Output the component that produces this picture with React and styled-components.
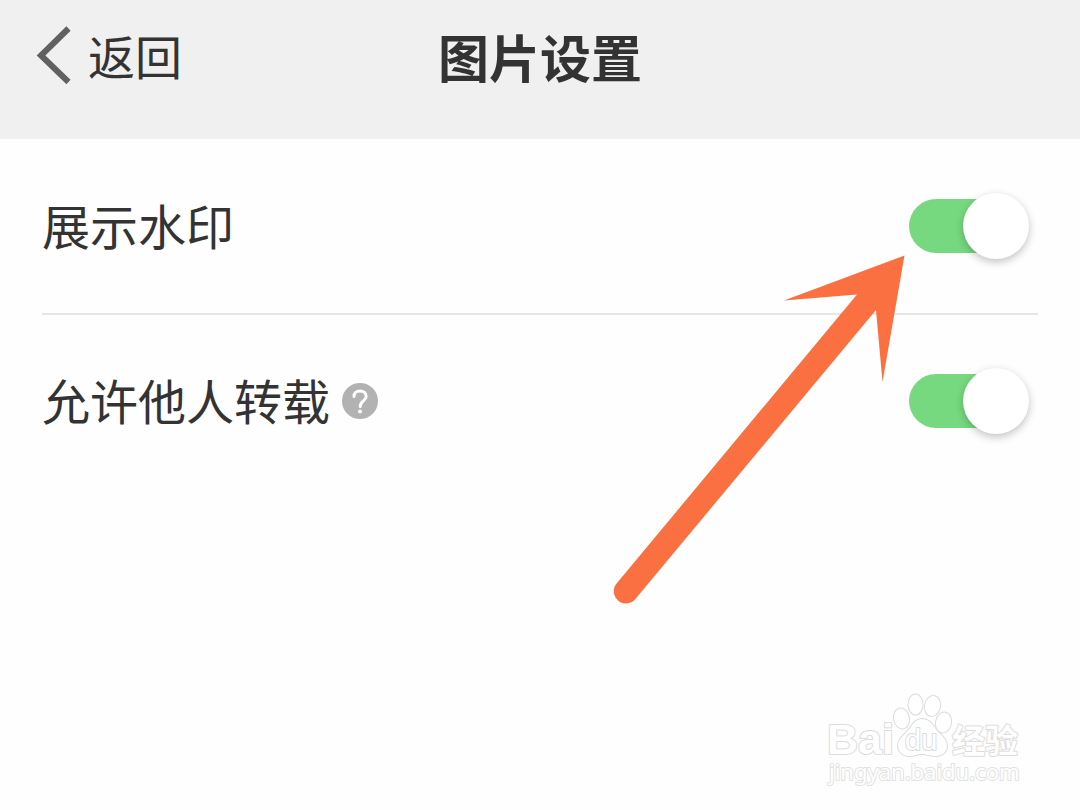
import React, { useState } from "react";
import styled, { createGlobalStyle } from "styled-components";

const GlobalStyle = createGlobalStyle`
  body {
    margin: 0;
    background-color: #fefefe;
    color: #333;
    font-family: "Noto Sans CJK SC", "Noto Sans", sans-serif;
  }
`;

const Page = styled.div`
  position: relative;
  min-height: 100vh;
  overflow: hidden;
`;

const Header = styled.header`
  display: grid;
  grid-template-columns: 1fr auto 1fr;
  align-items: center;
  box-sizing: border-box;
  padding: 20px 36px 47px;
  background-color: #f0f0f0;
`;

const BackButton = styled.button`
  display: flex;
  align-items: center;
  justify-self: start;
  gap: 16px;
  padding: 0 0 2px;
  border: none;
  background: none;
  color: inherit;
  font: inherit;
  font-size: 47px;
  line-height: 68px;
  cursor: pointer;
`;

const Title = styled.h1`
  margin: 0;
  padding: 2px 0;
  font-size: 51px;
  font-weight: 700;
  line-height: 68px;
`;

const Settings = styled.main`
  padding: 0 42px;
`;

const Row = styled.div`
  display: flex;
  align-items: center;
  justify-content: space-between;
  padding: 51px 0;

  & + & {
    padding: 50px 0;
    border-top: 2px solid #e6e6e6;
  }
`;

const LabelGroup = styled.div`
  display: flex;
  align-items: center;
  gap: 12px;
`;

const Label = styled.label`
  padding-bottom: 4px;
  font-size: 48px;
  line-height: 68px;
`;

const HelpButton = styled.button`
  display: flex;
  padding: 0;
  border: none;
  background: none;
  cursor: pointer;
`;

const Switch = styled.input`
  appearance: none;
  position: relative;
  width: 108px;
  height: 54px;
  margin: 0 21px 0 0;
  border-radius: 27px;
  background-color: ${(props) => (props.checked ? "#77d97f" : "#d9d9d9")};
  cursor: pointer;

  &::after {
    content: "";
    position: absolute;
    top: -6px;
    left: ${(props) => (props.checked ? "54px" : "-12px")};
    width: 66px;
    height: 66px;
    border-radius: 50%;
    background-color: #fff;
    box-shadow: 0 3px 9px rgba(0, 0, 0, 0.24);
  }
`;

const Arrow = styled.svg`
  position: absolute;
  top: 255px;
  right: 175px;
  pointer-events: none;
`;

const Watermark = styled.svg`
  position: absolute;
  right: 50px;
  bottom: 16px;
  pointer-events: none;
`;

const BackIcon = () => (
  <svg width="36" height="60" viewBox="0 0 36 60" aria-hidden="true">
    <path d="M32.500 3.500L5 30.500L32.500 57" fill="none" stroke="#616161" strokeWidth="6" />
  </svg>
);

const HelpIcon = () => (
  <svg width="36" height="36" viewBox="0 0 36 36" aria-hidden="true">
    <circle cx="18" cy="18" r="18" fill="#b2b2b2" />
    <path
      d="M12 13.500C12 10 14.500 8 18 8C21.500 8 24.200 10 24.200 13.300C24.200 18 18.200 18 18.200 23.500"
      fill="none"
      stroke="#fff"
      strokeWidth="3"
      strokeLinecap="round"
    />
    <circle cx="18" cy="28.500" r="2" fill="#fff" />
  </svg>
);

const PointerArrow = () => (
  <Arrow width="292" height="350" viewBox="613 255 292 350" aria-hidden="true">
    <path
      d="M904.500 255.500L784 300.500L857 294.500L617 583A12 12 0 0 0 635 599.500L876 310L882.500 382Z"
      fill="#fa7041"
    />
  </Arrow>
);

const BaiduWatermark = () => (
  <Watermark
    width="210"
    height="104"
    viewBox="820 690 210 104"
    fill="#fff"
    stroke="#dcdcdc"
    strokeWidth="2"
    strokeLinejoin="round"
    paintOrder="stroke"
    role="img"
    aria-label="Baidu"
  >
    <text x="827" y="754" fontFamily="Liberation Sans, sans-serif" fontWeight="700" fontSize="43">
      Bai
    </text>
    <g>
      <ellipse cx="901.500" cy="718.500" rx="7.500" ry="10" transform="rotate(-12 901.500 718.500)" />
      <ellipse cx="915.500" cy="704.500" rx="7" ry="10" />
      <ellipse cx="932.500" cy="706" rx="7.500" ry="10" transform="rotate(12 932.500 706)" />
      <ellipse cx="943.500" cy="722.500" rx="7.500" ry="10" transform="rotate(12 943.500 722.500)" />
      <path d="M922 719C928 719 932 723 935 728C939 734 947 738 947 746C947 752 942 756 936 756C930 756 927 754 922 754C917 754 914 756 909 756C903 756 898 752 898 745C898 738 906 734 910 728C913 723 917 719 922 719Z" />
    </g>
    <text x="905" y="750" fontFamily="Liberation Sans, sans-serif" fontSize="29">
      du
    </text>
    <text x="952" y="753" fontFamily="Noto Sans CJK SC, sans-serif" fontWeight="700" fontSize="33">
      经验
    </text>
    <text x="829" y="780" fontFamily="Noto Sans, sans-serif" fontSize="22" stroke="#e2e2e2">
      jingyan.baidu.com
    </text>
  </Watermark>
);

function App() {
  const [watermark, setWatermark] = useState(true);
  const [repost, setRepost] = useState(true);

  return (
    <>
      <GlobalStyle />
      <Page>
        <Header>
          <BackButton type="button">
            <BackIcon />
            返回
          </BackButton>
          <Title>图片设置</Title>
        </Header>
        <Settings>
          <Row>
            <Label htmlFor="watermark">展示水印</Label>
            <Switch
              id="watermark"
              type="checkbox"
              role="switch"
              checked={watermark}
              onChange={() => setWatermark(!watermark)}
            />
          </Row>
          <Row>
            <LabelGroup>
              <Label htmlFor="repost">允许他人转载</Label>
              <HelpButton type="button" aria-label="帮助">
                <HelpIcon />
              </HelpButton>
            </LabelGroup>
            <Switch
              id="repost"
              type="checkbox"
              role="switch"
              checked={repost}
              onChange={() => setRepost(!repost)}
            />
          </Row>
        </Settings>
        <PointerArrow />
        <BaiduWatermark />
      </Page>
    </>
  );
}

export default App;
